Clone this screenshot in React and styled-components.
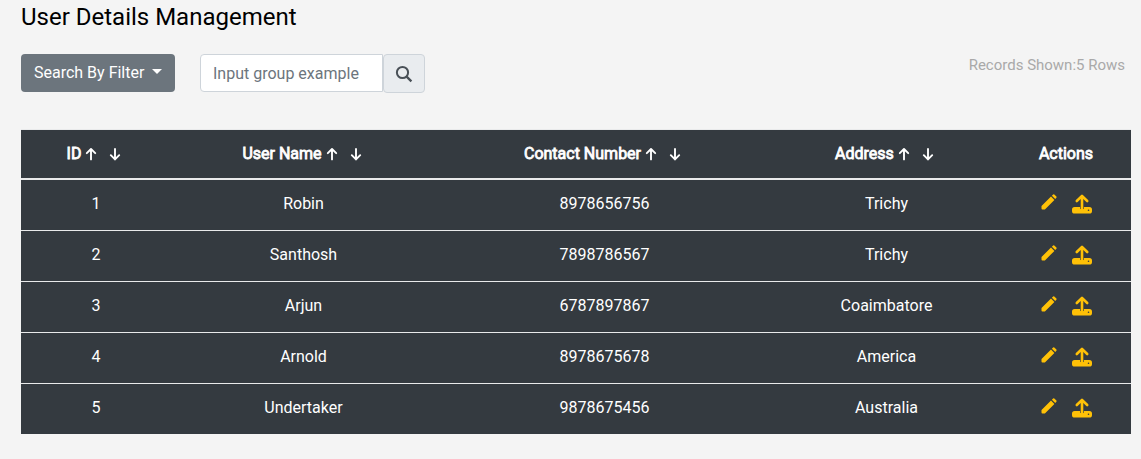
import React from "react";
import styled, { createGlobalStyle } from "styled-components";

const GlobalStyle = createGlobalStyle`
  *, *::before, *::after { box-sizing: border-box; }
  body {
    margin: 0;
    background: #f4f4f4;
    color: #000;
    font: 400 16px/24px Roboto, sans-serif;
  }
`;

const Page = styled.main`
  min-height: 459px;
  padding: 3px 10px 0 21px;
`;

const Title = styled.h1`
  margin: 0;
  font-size: 24px;
  font-weight: 400;
  line-height: 29px;
`;

const Toolbar = styled.div`
  display: flex;
  align-items: flex-start;
  height: 75px;
  margin-top: 22px;
`;

const FilterButton = styled.button`
  display: inline-flex;
  align-items: center;
  width: 154px;
  height: 38px;
  padding: 0 13px;
  border: 0;
  border-radius: 4px;
  background: #6c757d;
  color: #fff;
  font: inherit;
  white-space: nowrap;

  &::after {
    content: "";
    margin-left: 8px;
    margin-bottom: 3px;
    border-top: 5px solid;
    border-right: 5px solid transparent;
    border-left: 5px solid transparent;
  }
`;

const SearchGroup = styled.div`
  display: flex;
  align-items: flex-start;
  margin-left: 25px;
`;

const SearchInput = styled.input`
  width: 183px;
  height: 38px;
  padding: 0 12px;
  border: 1px solid #ced4da;
  border-radius: 4px 0 0 4px;
  background: #fff;
  font: inherit;

  &::placeholder { color: #6c757d; opacity: 1; }
`;

const SearchButton = styled.button`
  display: grid;
  place-items: center;
  width: 42px;
  height: 39px;
  padding: 0;
  border: 1px solid #ced4da;
  border-radius: 4px;
  background: #e9ecef;
  color: #495057;
`;

const RecordCount = styled.p`
  margin: 0 6px 0 auto;
  color: #a9a9a9;
  font-size: 15px;
  line-height: 22px;
`;

const Table = styled.table`
  width: 100%;
  table-layout: fixed;
  border-spacing: 0;
  background: #343a40;
  color: #fff;
  text-align: center;
`;

const Column = styled.col`
  width: ${(p) => p.$width}px;
`;

const HeaderCell = styled.th`
  height: 51px;
  padding: 0;
  border-top: 1px solid #e9eaeb;
  border-bottom: 2px solid #e9eaeb;
  font-weight: 400;
`;

const HeaderContent = styled.div`
  display: flex;
  align-items: center;
  justify-content: center;
  padding-right: ${(p) => (p.$sortable ? 3 : 0)}px;
  white-space: nowrap;
`;

const HeaderLabel = styled.span`
  -webkit-text-stroke: 0.8px #fff;
`;

const SortIcon = styled.svg`
  width: 12px;
  height: 14px;
  margin-left: ${(p) => p.$gap}px;
`;

const Cell = styled.td`
  height: 51px;
  padding: 0 0 2px 1px;
  border-top: 1px solid #e9eaeb;

  &:nth-child(2) { padding-left: 0; }

  tr:first-child > & {
    height: 50px;
    border-top: 0;
  }
`;

const Actions = styled.div`
  display: flex;
  align-items: flex-start;
  justify-content: center;
  gap: 15px;
  color: #ffc107;
`;

const IconButton = styled.button`
  display: block;
  padding: 0;
  border: 0;
  background: none;
  color: inherit;

  svg { display: block; }
`;

const columns = [
  { label: "ID", width: 149, sortable: true },
  { label: "User Name", width: 267, sortable: true },
  { label: "Contact Number", width: 334, sortable: true },
  { label: "Address", width: 230, sortable: true },
  { label: "Actions", width: 130, sortable: false },
];

const users = [
  [1, "Robin", "8978656756", "Trichy"],
  [2, "Santhosh", "7898786567", "Trichy"],
  [3, "Arjun", "6787897867", "Coaimbatore"],
  [4, "Arnold", "8978675678", "America"],
  [5, "Undertaker", "9878675456", "Australia"],
];

function SortArrow({ down, gap }) {
  return (
    <SortIcon
      $gap={gap}
      viewBox="0 0 12 14"
      fill="none"
      stroke="currentColor"
      strokeWidth="1.9"
      strokeLinecap="round"
      strokeLinejoin="round"
    >
      <path d={down ? "M6 2v10.4M1.8 8.2L6 12.4l4.2-4.2" : "M6 12.4V2M1.8 6.2L6 2l4.2 4.2"} />
    </SortIcon>
  );
}

function SearchIcon() {
  return (
    <svg width="18" height="18" viewBox="0 0 18 18" fill="none" stroke="currentColor" strokeWidth="2">
      <circle cx="7.5" cy="7.5" r="5.6" />
      <path d="M11.6 11.6L16.4 16.4" strokeWidth="2.3" />
    </svg>
  );
}

function PencilIcon() {
  return (
    <svg width="16" height="16" viewBox="0 0 16 16" fill="currentColor">
      <path d="M.5 12L10 2.5l3.4 3.4-9.5 9.5H1.4q-.9 0-.9-.9zM10.9 1.7L12.1.5q.6-.5 1.2 0l2.1 2.1q.5.6 0 1.2l-1.2 1.2z" />
    </svg>
  );
}

function UploadIcon() {
  return (
    <svg width="20" height="20" viewBox="0 0 20 20">
      <rect x="0" y="13" width="20" height="6.6" rx="2.6" fill="currentColor" />
      <path d="M8.1 13v1.2q1.9 2.4 3.8 0V13z" fill="#343a40" />
      <path
        d="M10 15V2M4.8 7L10 1.9 15.2 7"
        fill="none"
        stroke="currentColor"
        strokeWidth="2.6"
        strokeLinecap="round"
        strokeLinejoin="round"
      />
      <circle cx="16.5" cy="16.2" r="0.8" fill="#343a40" />
    </svg>
  );
}

export default function App() {
  return (
    <>
      <GlobalStyle />
      <Page>
        <Title>User Details Management</Title>
        <Toolbar>
          <FilterButton>Search By Filter</FilterButton>
          <SearchGroup>
            <SearchInput placeholder="Input group example" />
            <SearchButton aria-label="Search"><SearchIcon /></SearchButton>
          </SearchGroup>
          <RecordCount>Records Shown:5 Rows</RecordCount>
        </Toolbar>
        <Table>
          <colgroup>
            {columns.map((c) => <Column key={c.label} $width={c.width} />)}
          </colgroup>
          <thead>
            <tr>
              {columns.map((c) => (
                <HeaderCell key={c.label}>
                  <HeaderContent $sortable={c.sortable}>
                    <HeaderLabel>{c.label}</HeaderLabel>
                    {c.sortable && <><SortArrow gap={4} /><SortArrow down gap={12} /></>}
                  </HeaderContent>
                </HeaderCell>
              ))}
            </tr>
          </thead>
          <tbody>
            {users.map((row) => (
              <tr key={row[0]}>
                {row.map((value, i) => <Cell key={i}>{value}</Cell>)}
                <Cell>
                  <Actions>
                    <IconButton aria-label="Edit"><PencilIcon /></IconButton>
                    <IconButton aria-label="Upload"><UploadIcon /></IconButton>
                  </Actions>
                </Cell>
              </tr>
            ))}
          </tbody>
        </Table>
      </Page>
    </>
  );
}
